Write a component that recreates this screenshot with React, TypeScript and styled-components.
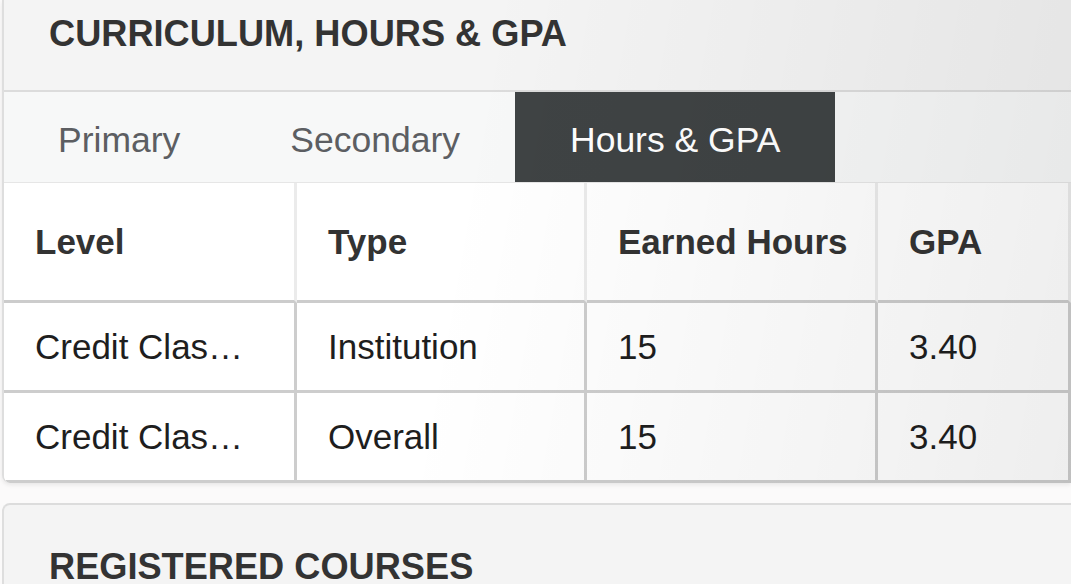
import React from "react";
import styled, { createGlobalStyle } from "styled-components";

const GlobalStyle = createGlobalStyle`
  * { box-sizing: border-box; }
  body {
    margin: 0;
    background: #fbfafa;
    font-family: "Liberation Sans", Arial, sans-serif;
    overflow: hidden;
  }
`;

type Row = { level: string; type: string; hours: string; gpa: string };

const rows: Row[] = [
  { level: "Credit Classes", type: "Institution", hours: "15", gpa: "3.40" },
  { level: "Credit Classes", type: "Overall", hours: "15", gpa: "3.40" },
];

const tabs = ["Primary", "Secondary", "Hours & GPA"];

const App = () => {
  return (
    <>
      <GlobalStyle />
      <Page>
        <Card>
          <CardHeader>
            <Heading>CURRICULUM, HOURS &amp; GPA</Heading>
          </CardHeader>
          <TabBar>
            {tabs.map((t) => (
              <Tab key={t} $active={t === "Hours & GPA"}>
                {t}
              </Tab>
            ))}
          </TabBar>
          <Table>
            <colgroup>
              <col style={{ width: 293 }} />
              <col style={{ width: 290 }} />
              <col style={{ width: 291 }} />
              <col />
            </colgroup>
            <thead>
              <tr>
                <HeadCell>Level</HeadCell>
                <HeadCell>Type</HeadCell>
                <HeadCell>Earned Hours</HeadCell>
                <HeadCell>GPA</HeadCell>
              </tr>
            </thead>
            <tbody>
              {rows.map((r, i) => (
                <tr key={i}>
                  <BodyCell>{r.level}</BodyCell>
                  <BodyCell>{r.type}</BodyCell>
                  <BodyCell>{r.hours}</BodyCell>
                  <BodyCell>{r.gpa}</BodyCell>
                </tr>
              ))}
            </tbody>
          </Table>
        </Card>
        <NextCard>
          <Heading>REGISTERED COURSES</Heading>
        </NextCard>
      </Page>
    </>
  );
};

const Page = styled.div`
  display: flex;
  flex-direction: column;
  gap: 20px;
  padding-left: 2px;
  width: 1071px;
  height: 584px;
`;

const Card = styled.section`
  position: relative;
  flex-shrink: 0;
  background: #ffffff;
  border-left: 2px solid #dedede;
  border-bottom-left-radius: 8px;
  box-shadow: 0 2px 4px rgba(0, 0, 0, 0.08);
  overflow: hidden;

  &::after {
    content: "";
    position: absolute;
    inset: 0;
    pointer-events: none;
    background: linear-gradient(100deg, rgba(0, 0, 0, 0) 42%, rgba(0, 0, 0, 0.065) 100%);
  }
`;

const CardHeader = styled.div`
  height: 92px;
  padding: 12px 45px 0;
  background: #f4f4f4;
  border-bottom: 2px solid #dcdcdc;
`;

const Heading = styled.h2`
  margin: 0;
  font-size: 36.2px;
  line-height: 43px;
  font-weight: 700;
  color: #333333;
`;

const TabBar = styled.div`
  display: flex;
  height: 91px;
  background: #f7f8f8;
  border-bottom: 1px solid #e6e6e6;
`;

const Tab = styled.div<{ $active?: boolean }>`
  display: flex;
  align-items: center;
  height: 90px;
  padding: 7px 55px 0;
  font-size: 35.5px;
  color: ${(p) => (p.$active ? "#ffffff" : "#5c5e62")};
  background: ${(p) => (p.$active ? "#3f4344" : "transparent")};

  &:first-child {
    padding-left: 54px;
  }
`;

const Table = styled.table`
  width: 100%;
  table-layout: fixed;
  border-collapse: separate;
  border-spacing: 0;
`;

const HeadCell = styled.th`
  height: 120px;
  padding: 0 8px 0 31px;
  text-align: left;
  font-size: 35px;
  font-weight: 700;
  color: #333333;
  background: #ffffff;
  border-right: 3px solid #ebebeb;
  border-bottom: 3px solid #cccccc;
  white-space: nowrap;
  overflow: hidden;
`;

const BodyCell = styled.td`
  height: 90px;
  padding: 0 40px 0 31px;
  font-size: 35px;
  color: #1e1e1e;
  background: #ffffff;
  border-right: 3px solid #cdcdcd;
  border-bottom: 3px solid #cdcdcd;
  white-space: nowrap;
  overflow: hidden;
  text-overflow: ellipsis;
`;

const NextCard = styled.section`
  position: relative;
  flex: 1;
  padding: 40px 45px 0;
  background: #f4f4f4;
  border-top: 2px solid #dcdcdc;
  border-left: 2px solid #dedede;
  border-top-left-radius: 8px;
`;

export default App;
